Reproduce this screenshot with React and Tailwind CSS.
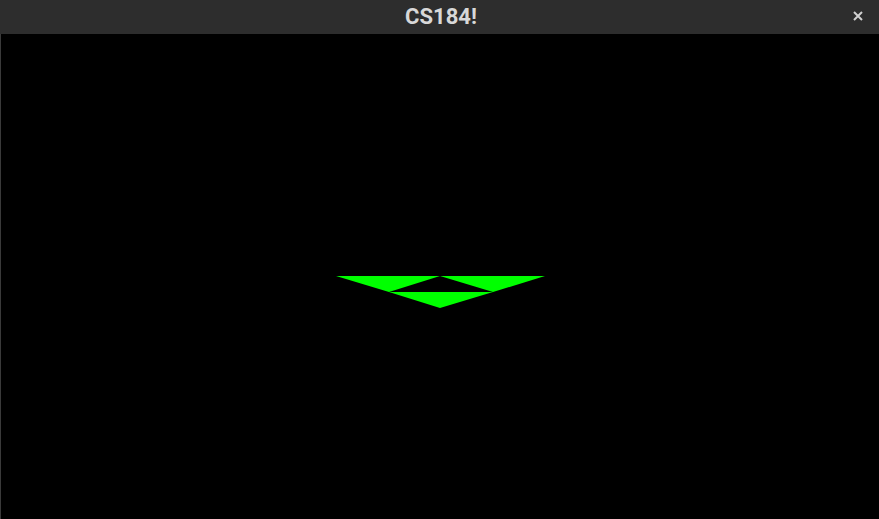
import React from 'react';

export default function App() {
    return (
        <div className="w-[879px] h-[519px] flex flex-col bg-black overflow-hidden" style={{ fontFamily: 'Roboto, "Noto Sans", sans-serif' }}>
            <div className="h-[34px] shrink-0 bg-[#2d2d2d] flex items-center relative">
                <div className="flex-1 text-center text-[22px] font-bold text-[#d8d8d8] leading-none pl-[3px]">CS184!</div>
                <div className="absolute right-[14px] top-[9px] w-[14px] h-[14px] flex items-center justify-center">
                    <svg width="12" height="12" viewBox="0 0 12 12">
                        <path d="M2 2 L10 10 M10 2 L2 10" stroke="#d0d0d0" strokeWidth="2" />
                    </svg>
                </div>
            </div>
            <div className="flex-1 border-l border-[#3a3a3a] bg-black">
                <svg width="878" height="485" viewBox="1 34 878 485">
                    <polygon points="336,276 440,276 389,292" fill="#00ff00" />
                    <polygon points="440,276 545,276 493,292" fill="#00ff00" />
                    <polygon points="389,292 493,292 440,308" fill="#00ff00" />
                </svg>
            </div>
        </div>
    );
}
